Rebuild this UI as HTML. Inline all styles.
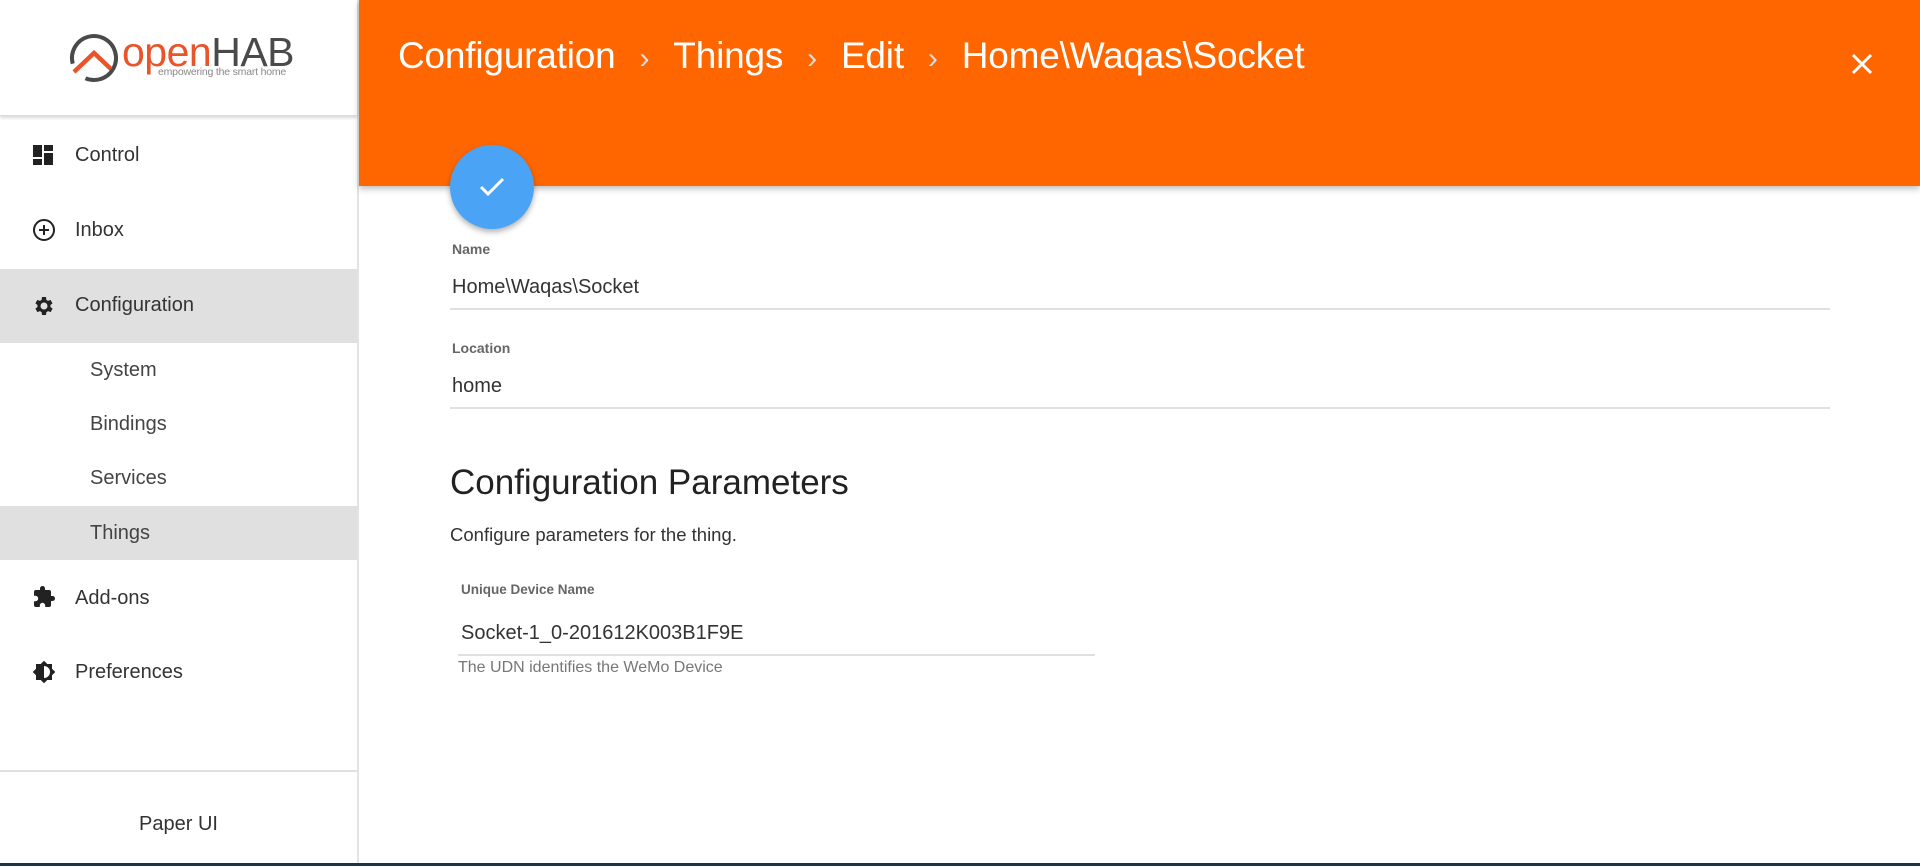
<!DOCTYPE html>
<html><head><meta charset="utf-8"><style>
*{margin:0;padding:0;box-sizing:border-box}
body{width:1920px;height:866px;overflow:hidden;background:#fff;font-family:"Liberation Sans",sans-serif;position:relative;color:#222}
.side{position:absolute;left:0;top:0;width:359px;height:866px;border-right:2px solid #e3e3e3;background:#fff}
.logohdr{position:absolute;left:0;top:0;width:357px;height:116px;border-bottom:1px solid #ddd;box-shadow:0 2px 3px rgba(0,0,0,.15)}
.nav{position:absolute;left:0;width:357px;font-size:20px;color:#333}
.nav .t{position:absolute;left:75px}
.sub{position:absolute;left:90px;font-size:20px;color:#444}
.ic{position:absolute;left:32px}
.top{position:absolute;left:359px;top:0;width:1561px;height:186px;background:#ff6600;box-shadow:0 3px 6px rgba(0,0,0,.25)}
.title{position:absolute;left:39px;top:35px;color:#fff;font-size:37px;white-space:nowrap;letter-spacing:-0.2px}
.title span{color:#ddd;margin:0 24px;font-size:30px}
.fab{position:absolute;left:450px;top:145px;width:84px;height:84px;border-radius:50%;background:#4aa3f5;box-shadow:0 3px 6px rgba(0,0,0,.3)}
.lbl{position:absolute;font-size:14px;font-weight:bold;color:#666}
.val{position:absolute;font-size:20px;color:#333}
.line{position:absolute;height:2px;background:#e0e0e0}
</style></head><body>
<div class="side">
 <div class="logohdr">
  <svg style="position:absolute;left:68px;top:32px" width="52" height="52" viewBox="0 0 52 52"><circle cx="26" cy="26" r="22" fill="none" stroke="#4a4a4a" stroke-width="4" stroke-dasharray="118 20" transform="rotate(165 26 26)"/><path d="M6 40 L26 21 L43 37" fill="none" stroke="#e8552a" stroke-width="4.5"/></svg>
  <div style="position:absolute;left:122px;top:29px;font-size:41px;letter-spacing:-0.5px;color:#e8552a">open<span style="color:#4a4a4a">HAB</span></div>
  <div style="position:absolute;left:158px;top:66px;font-size:10.5px;color:#888;letter-spacing:-0.2px">empowering the smart home</div>
 </div>
 <div class="nav" style="top:136px;height:40px">
  <svg class="ic" style="top:8px" width="22" height="22" viewBox="0 0 22 22" fill="#222"><rect x="1" y="1" width="9" height="12"/><rect x="12" y="1" width="9" height="6"/><rect x="12" y="9" width="9" height="12"/><rect x="1" y="15" width="9" height="6"/></svg>
  <div class="t" style="top:8px">Control</div></div>
 <div class="nav" style="top:211px;height:40px">
  <svg class="ic" style="top:7px" width="24" height="24" viewBox="0 0 24 24"><circle cx="12" cy="12" r="10" fill="none" stroke="#222" stroke-width="2"/><path d="M12 7v10M7 12h10" stroke="#222" stroke-width="2"/></svg>
  <div class="t" style="top:8px">Inbox</div></div>
 <div class="nav" style="top:269px;height:74px;background:#e0e0e0">
  <svg class="ic" style="top:25px" width="24" height="24" viewBox="0 0 24 24" fill="#222"><path d="M19.4 13a7.5 7.5 0 000-2l2.1-1.6-2-3.5-2.5 1a7 7 0 00-1.7-1L15 3h-4l-.4 2.9a7 7 0 00-1.7 1l-2.5-1-2 3.5L6.5 11a7.5 7.5 0 000 2l-2.1 1.6 2 3.5 2.5-1a7 7 0 001.7 1L11 21h4l.4-2.9a7 7 0 001.7-1l2.5 1 2-3.5zM13 15.5a3.5 3.5 0 110-7 3.5 3.5 0 010 7z" transform="translate(-1 0)"/></svg>
  <div class="t" style="top:25px">Configuration</div></div>
 <div class="sub" style="top:359px">System</div>
 <div class="sub" style="top:413px">Bindings</div>
 <div class="sub" style="top:467px">Services</div>
 <div class="nav" style="top:506px;height:54px;background:#e0e0e0"><div class="sub" style="top:16px">Things</div></div>
 <div class="nav" style="top:580px;height:40px">
  <svg class="ic" style="top:5px" width="24" height="24" viewBox="0 0 24 24" fill="#222"><path d="M20.5 11H19V7a2 2 0 00-2-2h-4V3.5a2.5 2.5 0 00-5 0V5H4a2 2 0 00-2 2v3.8h1.5a2.7 2.7 0 010 5.4H2V20a2 2 0 002 2h3.8v-1.5a2.7 2.7 0 015.4 0V22H17a2 2 0 002-2v-4h1.5a2.5 2.5 0 000-5z"/></svg>
  <div class="t" style="top:7px">Add-ons</div></div>
 <div class="nav" style="top:653px;height:40px">
  <svg class="ic" style="top:7px" width="24" height="24" viewBox="0 0 24 24"><path d="M20 8.7V4h-4.7L12 .7 8.7 4H4v4.7L.7 12 4 15.3V20h4.7l3.3 3.3 3.3-3.3H20v-4.7l3.3-3.3z" fill="#222"/><path d="M12 6a6 6 0 010 12z" fill="#fff"/></svg>
  <div class="t" style="top:8px">Preferences</div></div>
 <div style="position:absolute;left:0;top:770px;width:357px;height:2px;background:#e0e0e0"></div>
 <div style="position:absolute;left:0;top:813px;width:357px;text-align:center;font-size:20px;color:#333">Paper UI</div>
</div>
<div style="position:absolute;left:0;top:863px;width:1920px;height:3px;background:#1f3340"></div>
<div class="top">
 <div class="title">Configuration<span>›</span>Things<span>›</span>Edit<span>›</span>Home\Waqas\Socket</div>
 <svg style="position:absolute;left:1492px;top:53px" width="22" height="22" viewBox="0 0 22 22"><path d="M2 2L20 20M20 2L2 20" stroke="#fff" stroke-width="3"/></svg>
</div>
<div class="fab"><svg style="position:absolute;left:28px;top:30px" width="28" height="24" viewBox="0 0 28 24"><path d="M3 12l7 7L25 4" fill="none" stroke="#fff" stroke-width="3"/></svg></div>
<div class="lbl" style="left:452px;top:241px">Name</div>
<div class="val" style="left:452px;top:276px">Home\Waqas\Socket</div>
<div class="line" style="left:450px;top:308px;width:1380px"></div>
<div class="lbl" style="left:452px;top:340px">Location</div>
<div class="val" style="left:452px;top:375px">home</div>
<div class="line" style="left:450px;top:407px;width:1380px"></div>
<div style="position:absolute;left:450px;top:463px;font-size:35px;color:#222">Configuration Parameters</div>
<div style="position:absolute;left:450px;top:524px;font-size:18.5px;color:#333">Configure parameters for the thing.</div>
<div class="lbl" style="left:461px;top:582px;font-size:13.5px">Unique Device Name</div>
<div class="val" style="left:461px;top:622px">Socket-1_0-201612K003B1F9E</div>
<div class="line" style="left:458px;top:654px;width:637px"></div>
<div style="position:absolute;left:458px;top:659px;font-size:16px;color:#777">The UDN identifies the WeMo Device</div>
</body></html>
